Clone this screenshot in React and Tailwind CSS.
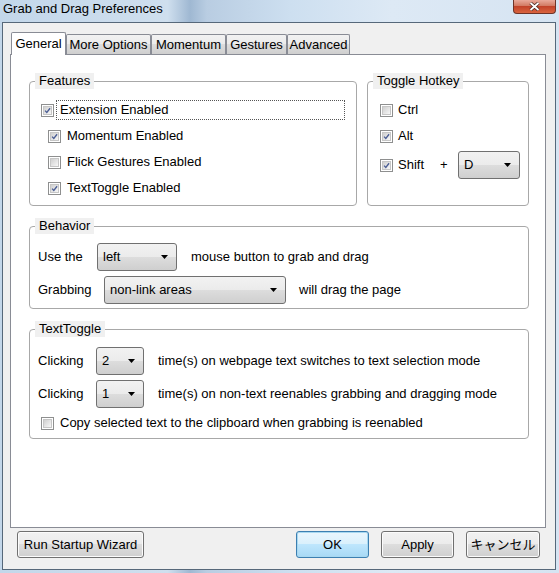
import React, { useState } from 'react';

const FONT = "font-['Liberation_Sans','Noto_Sans_CJK_JP',sans-serif]";

// Vista style check box, 13x13
const CheckBox = ({ checked, onChange }) => (
  <button
    type="button"
    onClick={() => onChange(!checked)}
    className="w-[13px] h-[13px] shrink-0 border border-[#8e8f8f] bg-white p-px"
  >
    <span className="relative block w-full h-full border border-[#c6c6c6] bg-[linear-gradient(135deg,#cfcfcf,#f7f7f7)]">
      {checked && (
        <svg viewBox="0 0 9 9" className="absolute inset-0 w-full h-full">
          <path d="M1.4 4.6 L3.6 7 L7.8 1.6" fill="none" stroke="#4a5d94" strokeWidth="1.7" />
        </svg>
      )}
    </span>
  </button>
);

const Select = ({ value, width }) => (
  <div
    className={`flex items-center h-[28px] ${width} shrink-0 rounded-[3px] border border-[#707070] bg-[linear-gradient(#f2f2f2,#ebebeb_50%,#dddddd_50%,#cfcfcf)] pl-[5px] pr-[8px]`}
  >
    <span className="flex-1">{value}</span>
    <svg width="7" height="4" viewBox="0 0 7 4">
      <path d="M0 0 H7 L3.5 4 Z" fill="#000" />
    </svg>
  </div>
);

const Group = ({ title, className, children }) => (
  <fieldset className={`border border-[#a8a8a8] rounded-[4px] p-0 m-0 ${className}`}>
    <legend className="ml-[5px] px-[4px] h-[16px] leading-[16px] bg-[#f0f0f0]">{title}</legend>
    {children}
  </fieldset>
);

const Button = ({ children, width, focused }) => (
  <button
    type="button"
    className={`h-[27px] ${width} rounded-[3px] border ${
      focused
        ? 'border-[#3c7fb1] shadow-[inset_0_0_0_1px_#a8d8f0] bg-[linear-gradient(#eaf6fd,#d9f0fc_50%,#bee6fd_50%,#a7d9f5)]'
        : 'border-[#707070] shadow-[inset_0_0_0_1px_#fbfbfb] bg-[linear-gradient(#f2f2f2,#ebebeb_50%,#dddddd_50%,#cfcfcf)]'
    }`}
  >
    {children}
  </button>
);

const tabs = [
  { name: 'General', w: 'w-[55px]' },
  { name: 'More Options', w: 'w-[85px]' },
  { name: 'Momentum', w: 'w-[75px]' },
  { name: 'Gestures', w: 'w-[61px]' },
  { name: 'Advanced', w: 'w-[63px]' },
];

export default function App() {
  const [tab, setTab] = useState('General');
  const [opts, setOpts] = useState({
    extension: true,
    momentum: true,
    flick: false,
    textToggle: true,
    ctrl: false,
    alt: true,
    shift: true,
    copy: false,
  });
  const set = (key) => (v) => setOpts({ ...opts, [key]: v });

  return (
    <div
      className={`${FONT} text-[13px] text-black w-[559px] h-[573px] overflow-hidden flex flex-col bg-[linear-gradient(90deg,#c3d7ea,#cfdfee_30%,#9fb8d2_34%,#b9cde2_37%,#cddff0_52%,#dde9f5_70%,#d6e4f2)]`}
    >
      {/* title bar */}
      <div className="h-[22px] shrink-0 flex items-start justify-between pl-[3px]">
        <span className="mt-[1px] leading-[16px]">Grab and Drag Preferences</span>
        <div className="mr-[3px] w-[43px] h-[14px] flex items-center justify-center rounded-b-[4px] border border-t-0 border-[#6e3428] bg-[linear-gradient(#e9a99a,#d27a63_45%,#c2432a_50%,#d9643f)]">
          <svg width="11" height="9" viewBox="0 0 11 9">
            <path d="M1.5 1 L9.5 8 M9.5 1 L1.5 8" stroke="#4a2a24" strokeWidth="3.4" />
            <path d="M1.5 1 L9.5 8 M9.5 1 L1.5 8" stroke="#fff" strokeWidth="1.8" />
          </svg>
        </div>
      </div>

      {/* client area */}
      <div className="ml-[2px] w-[554px] h-[548px] border border-[#56687a] bg-[#f0f0f0] flex flex-col pt-[9px] pl-[7px]">
        <div className="flex items-end h-[22px] pl-px">
          {tabs.map((t) =>
            t.name === tab ? (
              <button
                key={t.name}
                onClick={() => setTab(t.name)}
                className={`${t.w} h-[23px] -mb-px z-10 border border-b-0 border-[#898c95] bg-white rounded-t-[2px] leading-[20px] text-center`}
              >
                {t.name}
              </button>
            ) : (
              <button
                key={t.name}
                onClick={() => setTab(t.name)}
                className={`${t.w} h-[20px] border border-b-0 border-[#898c95] rounded-t-[2px] bg-[linear-gradient(#f2f2f2,#ebebeb_50%,#dddddd_50%,#cfcfcf)] leading-[18px] text-center`}
              >
                {t.name}
              </button>
            )
          )}
        </div>

        <div className="w-[536px] h-[474px] border border-[#898c95] bg-white pt-[18px] pl-[18px] flex flex-col gap-[12px]">
          <div className="flex gap-[10px]">
            <Group title="Features" className="w-[328px] h-[133px]">
              <div className="pt-[11px] pl-[11px] flex flex-col gap-[6px]">
                <div className="flex items-center h-[20px]">
                  <CheckBox checked={opts.extension} onChange={set('extension')} />
                  <span className="ml-[2px] w-[289px] h-[20px] leading-[18px] border border-dotted border-[#555] pl-[3px]">
                    Extension Enabled
                  </span>
                </div>
                {[
                  ['momentum', 'Momentum Enabled'],
                  ['flick', 'Flick Gestures Enabled'],
                  ['textToggle', 'TextToggle Enabled'],
                ].map(([key, label]) => (
                  <div key={key} className="flex items-center h-[20px] pl-[7px]">
                    <CheckBox checked={opts[key]} onChange={set(key)} />
                    <span className="ml-[6px]">{label}</span>
                  </div>
                ))}
              </div>
            </Group>

            <Group title="Toggle Hotkey" className="w-[162px] h-[133px]">
              <div className="pt-[11px] pl-[12px] flex flex-col">
                <div className="flex items-center h-[20px]">
                  <CheckBox checked={opts.ctrl} onChange={set('ctrl')} />
                  <span className="ml-[5px]">Ctrl</span>
                </div>
                <div className="flex items-center h-[20px] mt-[6px]">
                  <CheckBox checked={opts.alt} onChange={set('alt')} />
                  <span className="ml-[5px]">Alt</span>
                </div>
                <div className="flex items-center h-[28px] mt-[5px]">
                  <CheckBox checked={opts.shift} onChange={set('shift')} />
                  <span className="ml-[5px] w-[42px]">Shift</span>
                  <span className="w-[18px]">+</span>
                  <Select value="D" width="w-[62px]" />
                </div>
              </div>
            </Group>
          </div>

          <Group title="Behavior" className="w-[500px] h-[91px]">
            <div className="pt-[9px] pl-[8px] flex flex-col gap-[5px]">
              <div className="flex items-center h-[28px]">
                <span className="w-[59px]">Use the</span>
                <Select value="left" width="w-[80px]" />
                <span className="ml-[14px]">mouse button to grab and drag</span>
              </div>
              <div className="flex items-center h-[28px]">
                <span className="w-[66px]">Grabbing</span>
                <Select value="non-link areas" width="w-[182px]" />
                <span className="ml-[13px]">will drag the page</span>
              </div>
            </div>
          </Group>

          <Group title="TextToggle" className="w-[500px] h-[118px]">
            <div className="pt-[10px] pl-[8px] flex flex-col gap-[5px]">
              <div className="flex items-center h-[28px]">
                <span className="w-[58px]">Clicking</span>
                <Select value="2" width="w-[48px]" />
                <span className="ml-[14px]">time(s) on webpage text switches to text selection mode</span>
              </div>
              <div className="flex items-center h-[28px]">
                <span className="w-[58px]">Clicking</span>
                <Select value="1" width="w-[48px]" />
                <span className="ml-[14px]">time(s) on non-text reenables grabbing and dragging mode</span>
              </div>
              <div className="flex items-center h-[20px] pl-[3px]">
                <CheckBox checked={opts.copy} onChange={set('copy')} />
                <span className="ml-[6px]">Copy selected text to the clipboard when grabbing is reenabled</span>
              </div>
            </div>
          </Group>
        </div>

        <div className="flex mt-[3px] pl-[7px] w-[530px]">
          <Button width="w-[127px]">Run Startup Wizard</Button>
          <div className="flex-1" />
          <div className="flex gap-[12px]">
            <Button width="w-[73px]" focused>OK</Button>
            <Button width="w-[73px]">Apply</Button>
            <Button width="w-[74px]">キャンセル</Button>
          </div>
        </div>
      </div>
    </div>
  );
}
